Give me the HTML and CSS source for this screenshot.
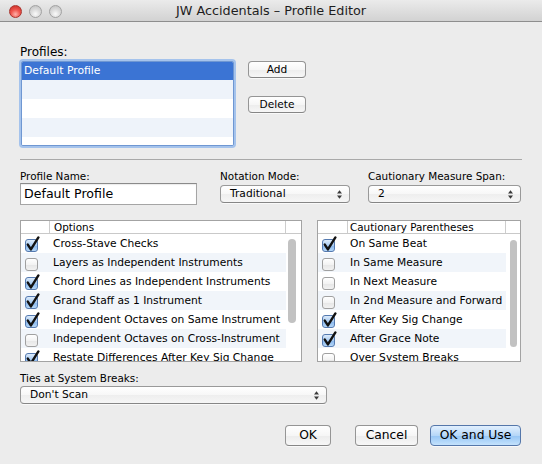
FILE: index.html
```html
<!DOCTYPE html>
<html>
<head>
<meta charset="utf-8">
<title>JW Accidentals – Profile Editor</title>
<link rel="stylesheet" href="styles.css">
</head>
<body>
<div class="window">
  <div class="titlebar">
    <div class="lights">
      <span class="light close"></span>
      <span class="light"></span>
      <span class="light"></span>
    </div>
    <div class="title">JW Accidentals – Profile Editor</div>
    <div></div>
  </div>

  <div class="main">
    <div class="lbl-big">Profiles:</div>
    <div class="profiles">
      <div class="listbox">
        <div class="lrow sel">Default Profile</div>
        <div class="lrow alt"></div>
        <div class="lrow"></div>
        <div class="lrow alt"></div>
        <div class="lrow"></div>
      </div>
      <div class="sidebtns">
        <div class="btn small">Add</div>
        <div class="btn small">Delete</div>
      </div>
    </div>

    <div class="sep"></div>

    <div class="fields">
      <div class="field">
        <div class="lbl">Profile Name:</div>
        <div class="textfield">Default Profile</div>
      </div>
      <div class="field">
        <div class="lbl">Notation Mode:</div>
        <div class="popup w-mode"><span>Traditional</span><svg class="updown" width="5" height="9" viewBox="0 0 5 9"><path d="M0 3.6 L2.5 0.2 L5 3.6Z M0 5.4 L2.5 8.8 L5 5.4Z"/></svg></div>
      </div>
      <div class="field">
        <div class="lbl">Cautionary Measure Span:</div>
        <div class="popup w-span"><span>2</span><svg class="updown" width="5" height="9" viewBox="0 0 5 9"><path d="M0 3.6 L2.5 0.2 L5 3.6Z M0 5.4 L2.5 8.8 L5 5.4Z"/></svg></div>
      </div>
    </div>

    <div class="tables">
      <div class="table t-left">
        <div class="thead">
          <div class="hc1"></div>
          <div class="hc2">Options</div>
          <div class="hc3"></div>
        </div>
        <div class="tbody">
          <div class="rows">
            <div class="row"><span class="cb on"><svg class="tick" width="15" height="16" viewBox="0 0 15 16"><path d="M2.8 8.6 L5.9 13.4 L13.4 1.4"/></svg></span><span class="rtext">Cross-Stave Checks</span></div>
            <div class="row alt"><span class="cb"></span><span class="rtext">Layers as Independent Instruments</span></div>
            <div class="row"><span class="cb on"><svg class="tick" width="15" height="16" viewBox="0 0 15 16"><path d="M2.8 8.6 L5.9 13.4 L13.4 1.4"/></svg></span><span class="rtext">Chord Lines as Independent Instruments</span></div>
            <div class="row alt"><span class="cb on"><svg class="tick" width="15" height="16" viewBox="0 0 15 16"><path d="M2.8 8.6 L5.9 13.4 L13.4 1.4"/></svg></span><span class="rtext">Grand Staff as 1 Instrument</span></div>
            <div class="row"><span class="cb on"><svg class="tick" width="15" height="16" viewBox="0 0 15 16"><path d="M2.8 8.6 L5.9 13.4 L13.4 1.4"/></svg></span><span class="rtext">Independent Octaves on Same Instrument</span></div>
            <div class="row alt"><span class="cb"></span><span class="rtext">Independent Octaves on Cross-Instrument</span></div>
            <div class="row"><span class="cb on"><svg class="tick" width="15" height="16" viewBox="0 0 15 16"><path d="M2.8 8.6 L5.9 13.4 L13.4 1.4"/></svg></span><span class="rtext">Restate Differences After Key Sig Change</span></div>
          </div>
          <div class="scroll"><div class="thumb"></div></div>
        </div>
      </div>

      <div class="table t-right">
        <div class="thead">
          <div class="hc1"></div>
          <div class="hc2">Cautionary Parentheses</div>
          <div class="hc3"></div>
        </div>
        <div class="tbody">
          <div class="rows">
            <div class="row"><span class="cb on"><svg class="tick" width="15" height="16" viewBox="0 0 15 16"><path d="M2.8 8.6 L5.9 13.4 L13.4 1.4"/></svg></span><span class="rtext">On Same Beat</span></div>
            <div class="row alt"><span class="cb"></span><span class="rtext">In Same Measure</span></div>
            <div class="row"><span class="cb"></span><span class="rtext">In Next Measure</span></div>
            <div class="row alt"><span class="cb"></span><span class="rtext">In 2nd Measure and Forward</span></div>
            <div class="row"><span class="cb on"><svg class="tick" width="15" height="16" viewBox="0 0 15 16"><path d="M2.8 8.6 L5.9 13.4 L13.4 1.4"/></svg></span><span class="rtext">After Key Sig Change</span></div>
            <div class="row alt"><span class="cb on"><svg class="tick" width="15" height="16" viewBox="0 0 15 16"><path d="M2.8 8.6 L5.9 13.4 L13.4 1.4"/></svg></span><span class="rtext">After Grace Note</span></div>
            <div class="row"><span class="cb"></span><span class="rtext">Over System Breaks</span></div>
          </div>
          <div class="scroll"><div class="thumb"></div></div>
        </div>
      </div>
    </div>

    <div class="lbl ties-lbl">Ties at System Breaks:</div>
    <div class="popup w-ties"><span>Don't Scan</span><svg class="updown" width="5" height="9" viewBox="0 0 5 9"><path d="M0 3.6 L2.5 0.2 L5 3.6Z M0 5.4 L2.5 8.8 L5 5.4Z"/></svg></div>

    <div class="actions">
      <div class="btn big b-ok">OK</div>
      <div class="btn big b-cancel">Cancel</div>
      <div class="btn big default b-use">OK and Use</div>
    </div>
  </div>
</div>
</body>
</html>
```

FILE: styles.css
```css
html, body {
  margin: 0;
  padding: 0;
}

body {
  font-family: "DejaVu Sans", "Liberation Sans", sans-serif;
  color: #000;
  background: #ececec;
}

.window {
  width: 542px;
  height: 464px;
  overflow: hidden;
  background: #ececec;
}

/* ---------- title bar ---------- */
.titlebar {
  height: 22px;
  box-sizing: border-box;
  border-bottom: 1px solid #8e8e8e;
  background: linear-gradient(#ebebeb, #d2d2d2);
  display: grid;
  grid-template-columns: 1fr auto 1fr;
  align-items: center;
}

.lights {
  display: flex;
  gap: 7px;
  padding-left: 9px;
  padding-top: 1px;
}

.light {
  width: 13px;
  height: 13px;
  box-sizing: border-box;
  border-radius: 50%;
  border: 1px solid #a2a2a2;
  background: radial-gradient(circle at 50% 72%, #fafafa 0, #dcdcdc 45%, #bdbdbd 100%);
}

.light.close {
  border-color: #a9342e;
  background: radial-gradient(circle at 50% 75%, #ffb3ab 0, #f0574f 45%, #c42820 100%);
}

.title {
  font-size: 12.8px;
  line-height: 21px;
  color: #1e1e1e;
  white-space: nowrap;
}

/* ---------- main ---------- */
.main {
  padding: 0 20px;
}

.lbl-big {
  margin-top: 23px;
  height: 15px;
  font-size: 12px;
  line-height: 15px;
}

.profiles {
  display: flex;
  margin-top: 1px;
}

.listbox {
  margin-left: 1px;
  width: 213px;
  height: 85px;
  box-sizing: border-box;
  border: 1px solid #6f97d2;
  border-radius: 2px;
  box-shadow: 0 0 0 2px #a5c3ec;
  background: #fff;
  overflow: hidden;
}

.lrow {
  height: 19px;
  background: #fff;
}

.lrow.alt {
  background: #eef3fa;
}

.lrow.sel {
  height: 18px;
  background: #3b74d4;
  color: #fff;
  font-size: 10.8px;
  line-height: 17px;
  padding-left: 2px;
}

.sidebtns {
  margin-left: 14px;
  display: flex;
  flex-direction: column;
  gap: 18px;
}

.btn {
  box-sizing: border-box;
  border: 1px solid #959595;
  border-bottom-color: #868686;
  border-radius: 4px;
  background: linear-gradient(#ffffff, #f6f6f6 50%, #ececec 51%, #f7f7f7);
  box-shadow: 0 1px 0 rgba(255, 255, 255, 0.7);
  text-align: center;
  white-space: nowrap;
}

.btn.small {
  width: 58px;
  height: 17px;
  font-size: 10.6px;
  line-height: 15px;
}

.sep {
  margin-top: 13px;
  height: 1px;
  background: #a9a9a9;
  width: 502px;
}

/* ---------- fields ---------- */
.fields {
  margin-top: 10px;
  display: grid;
  grid-template-columns: 200px 148px 153px;
}

.lbl {
  height: 13px;
  font-size: 10.4px;
  line-height: 13px;
  white-space: nowrap;
}

.textfield {
  width: 177px;
  height: 22px;
  box-sizing: border-box;
  border: 1px solid #a5a5a5;
  border-top-color: #8a8a8a;
  background: #fff;
  font-size: 12.6px;
  line-height: 20px;
  padding-left: 3px;
  box-shadow: inset 0 1px 1px rgba(0, 0, 0, 0.08);
}

.popup {
  margin-top: 2px;
  height: 18px;
  box-sizing: border-box;
  border: 1px solid #999;
  border-bottom-color: #868686;
  border-radius: 4px;
  background: linear-gradient(#ffffff, #f7f7f7 50%, #eeeeee 51%, #f6f6f6);
  box-shadow: 0 1px 0 rgba(255, 255, 255, 0.7);
  display: flex;
  align-items: center;
  justify-content: space-between;
  padding: 0 7px 0 9px;
  font-size: 10.7px;
  line-height: 16px;
}

.updown {
  fill: #3a3a3a;
}

.w-mode {
  width: 130px;
}

.w-span {
  width: 153px;
}

.w-ties {
  width: 307px;
  margin-top: 1px;
}

/* ---------- tables ---------- */
.tables {
  margin-top: 15px;
  display: flex;
  gap: 15px;
  height: 142px;
}

.table {
  height: 142px;
  box-sizing: border-box;
  border: 1px solid #a3a3a3;
  background: #fff;
  display: flex;
  flex-direction: column;
  overflow: hidden;
}

.t-left {
  width: 282px;
}

.t-right {
  width: 204px;
}

.thead {
  height: 13px;
  box-sizing: border-box;
  border-bottom: 1px solid #c9c9c9;
  display: flex;
  font-size: 10.4px;
  line-height: 12px;
}

.hc1 {
  width: 28px;
  border-right: 1px solid #cdcdcd;
}

.t-right .hc1 {
  width: 29px;
}

.hc2 {
  flex: 1;
  padding-left: 4px;
  border-right: 1px solid #cdcdcd;
  white-space: nowrap;
}

.t-right .hc2 {
  padding-left: 2px;
}

.hc3 {
  width: 15px;
}

.t-right .hc3 {
  width: 14px;
}

.tbody {
  flex: 1;
  display: flex;
  overflow: hidden;
}

.rows {
  flex: 1;
  overflow: hidden;
}

.row {
  height: 19px;
  display: flex;
  align-items: flex-start;
  padding-left: 4px;
  background: #fff;
}

.row.alt {
  background: #f1f5fa;
}

.rtext {
  font-size: 10.7px;
  line-height: 19px;
  white-space: nowrap;
}

.cb {
  position: relative;
  flex: none;
  width: 13px;
  height: 13px;
  margin-top: 5px;
  margin-right: 15px;
  box-sizing: border-box;
  border: 1px solid #a0a0a0;
  border-radius: 3px;
  background: linear-gradient(#ffffff, #f3f3f3 50%, #e6e6e6 51%, #f2f2f2);
}

.cb.on {
  border-color: #557ab0;
  background: linear-gradient(#dcebfb, #a9cbf1 50%, #86b5ec 51%, #b5d7f8);
}

.tick {
  position: absolute;
  left: -1px;
  top: -4px;
  fill: none;
  stroke: #111;
  stroke-width: 2.4;
  stroke-linecap: round;
  stroke-linejoin: round;
}

.scroll {
  width: 15px;
  background: #fff;
}

.t-right .scroll {
  width: 14px;
}

.thumb {
  margin: 5px 0 0 2px;
  width: 8px;
  height: 84px;
  border-radius: 4px;
  background: #c2c2c2;
}

.t-right .thumb {
  margin: 6px 0 0 4px;
  width: 7px;
  height: 107px;
}

/* ---------- bottom ---------- */
.ties-lbl {
  margin-top: 10px;
}

.actions {
  margin-top: 21px;
  display: flex;
  justify-content: flex-end;
  padding-right: 1px;
}

.btn.big {
  height: 21px;
  font-size: 12.3px;
  line-height: 19px;
}

.b-ok {
  width: 46px;
}

.b-cancel {
  width: 63px;
  margin-left: 24px;
}

.b-use {
  width: 91px;
  margin-left: 12px;
}

.btn.default {
  border-color: #5577aa;
  background: linear-gradient(#e2f0fe, #b6d7f8 50%, #95c5f5 51%, #c4e2fc);
}
```
